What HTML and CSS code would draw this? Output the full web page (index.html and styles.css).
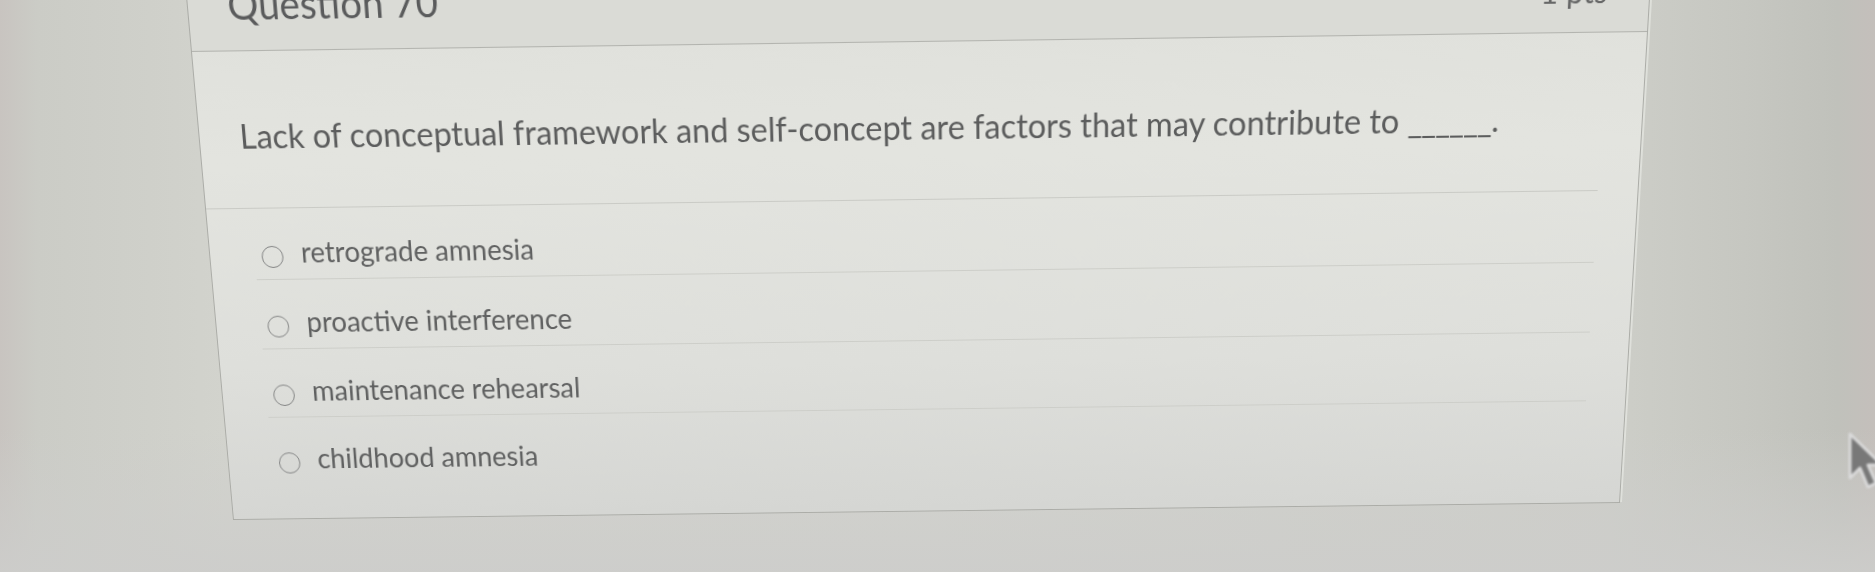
FILE: index.html
```html
<!DOCTYPE html>
<html lang="en">
<head>
<meta charset="utf-8">
<title>Question 70</title>
<link rel="stylesheet" href="styles.css">
</head>
<body>
<main class="screen">
  <section class="question">
    <header class="question-header">
      <h2 class="question-name">Question 70</h2>
      <span class="question-points">1 pts</span>
    </header>
    <div class="question-body">
      <p class="question-text">Lack of conceptual framework and self-concept are factors that may contribute to <span class="blank">______</span>.</p>
      <fieldset class="answers">
        <label class="answer"><input type="radio" name="q70"><span class="answer-text">retrograde amnesia</span></label>
        <label class="answer"><input type="radio" name="q70"><span class="answer-text">proactive interference</span></label>
        <label class="answer"><input type="radio" name="q70"><span class="answer-text">maintenance rehearsal</span></label>
        <label class="answer"><input type="radio" name="q70"><span class="answer-text">childhood amnesia</span></label>
      </fieldset>
    </div>
  </section>
</main>
<svg class="cursor" viewBox="0 0 40 64" width="40" height="64" aria-hidden="true">
  <path d="M3 3 L3 47 L13 37 L21 56 L29 52 L21 34 L35 34 Z" fill="#787878" stroke="#dadada" stroke-width="3" stroke-linejoin="round"/>
</svg>
</body>
</html>
```

FILE: styles.css
```css
html,
body {
  margin: 0;
  padding: 0;
}

body {
  position: relative;
  width: 1875px;
  height: 572px;
  overflow: hidden;
  font-family: Lato, "Noto Sans", sans-serif;
  background:
    linear-gradient(180deg, rgba(205, 205, 203, 0) 0%, rgba(205, 205, 203, 0) 75%, rgba(205, 205, 203, 0.9) 100%),
    linear-gradient(90deg, #c8c4c0 0%, #cbccc6 2%, #cfd0ca 8%, #d2d3cd 12%, #d3d4ce 50%, #cdcec8 86%, #c6c7c1 93%, #c0c1bb 98%, #c4bfbb 100%);
}

.screen {
  width: 1875px;
  height: 572px;
}

/* quiz question card, seen slightly tilted on the monitor */
.question {
  box-sizing: border-box;
  width: 1440px;
  height: 520px;
  border: 1px solid #abaca7;
  border-top: 0;
  background: linear-gradient(180deg, #dfe0db 0%, #e3e4df 30%, #dedfdb 70%, #d5d6d3 100%);
  color: #5c5d5d;
  transform-origin: 0 0;
  transform: matrix3d(1.006597, -0.013990, 0, -0.0000031606,
                      0.114336, 1.051481, 0, 0.00010719,
                      0, 0, 1, 0,
                      185.283, -0.574, 0, 0.994641);
  filter: blur(0.5px);
  box-shadow: 3px 0 0 -1px rgba(235, 236, 232, 0.6);
}

.question-header {
  box-sizing: border-box;
  height: 50px;
  display: flex;
  justify-content: space-between;
  align-items: flex-end;
  padding: 0 41px 25px 39px;
  border-bottom: 1px solid #b3b4af;
  background: #dadbd6;
}

.question-name {
  margin: 0;
  font-size: 38px;
  line-height: 1;
  font-weight: 400;
  color: #5a5b5c;
}

.question-points {
  margin-bottom: -1px;
  font-size: 30px;
  line-height: 1;
  color: #666767;
}

.question-body {
  padding: 61px 40px 0 40px;
}

.question-text {
  margin: 0 0 49px;
  font-size: 32.4px;
  line-height: 42px;
}

.blank {
  letter-spacing: -1px;
}

.answers {
  margin: 0 0 0 -40px;
  padding: 0 0 0 45px;
  min-inline-size: 0;
  border: 0;
  border-top: 1px solid #cacbc6;
}

.answer {
  box-sizing: border-box;
  height: 70px;
  display: flex;
  align-items: center;
  padding-top: 14px;
  border-top: 1px solid transparent;
  font-size: 28px;
  color: #606161;
}

.answer + .answer {
  border-top-color: #cdcec9;
}

.answer input {
  appearance: none;
  -webkit-appearance: none;
  flex: none;
  width: 22px;
  height: 22px;
  margin: 10px 18px 0 7px;
  border: 1.5px solid #858686;
  border-radius: 50%;
  background: transparent;
}

.cursor {
  position: absolute;
  left: 1847px;
  top: 431px;
  filter: blur(1.2px);
}
```
